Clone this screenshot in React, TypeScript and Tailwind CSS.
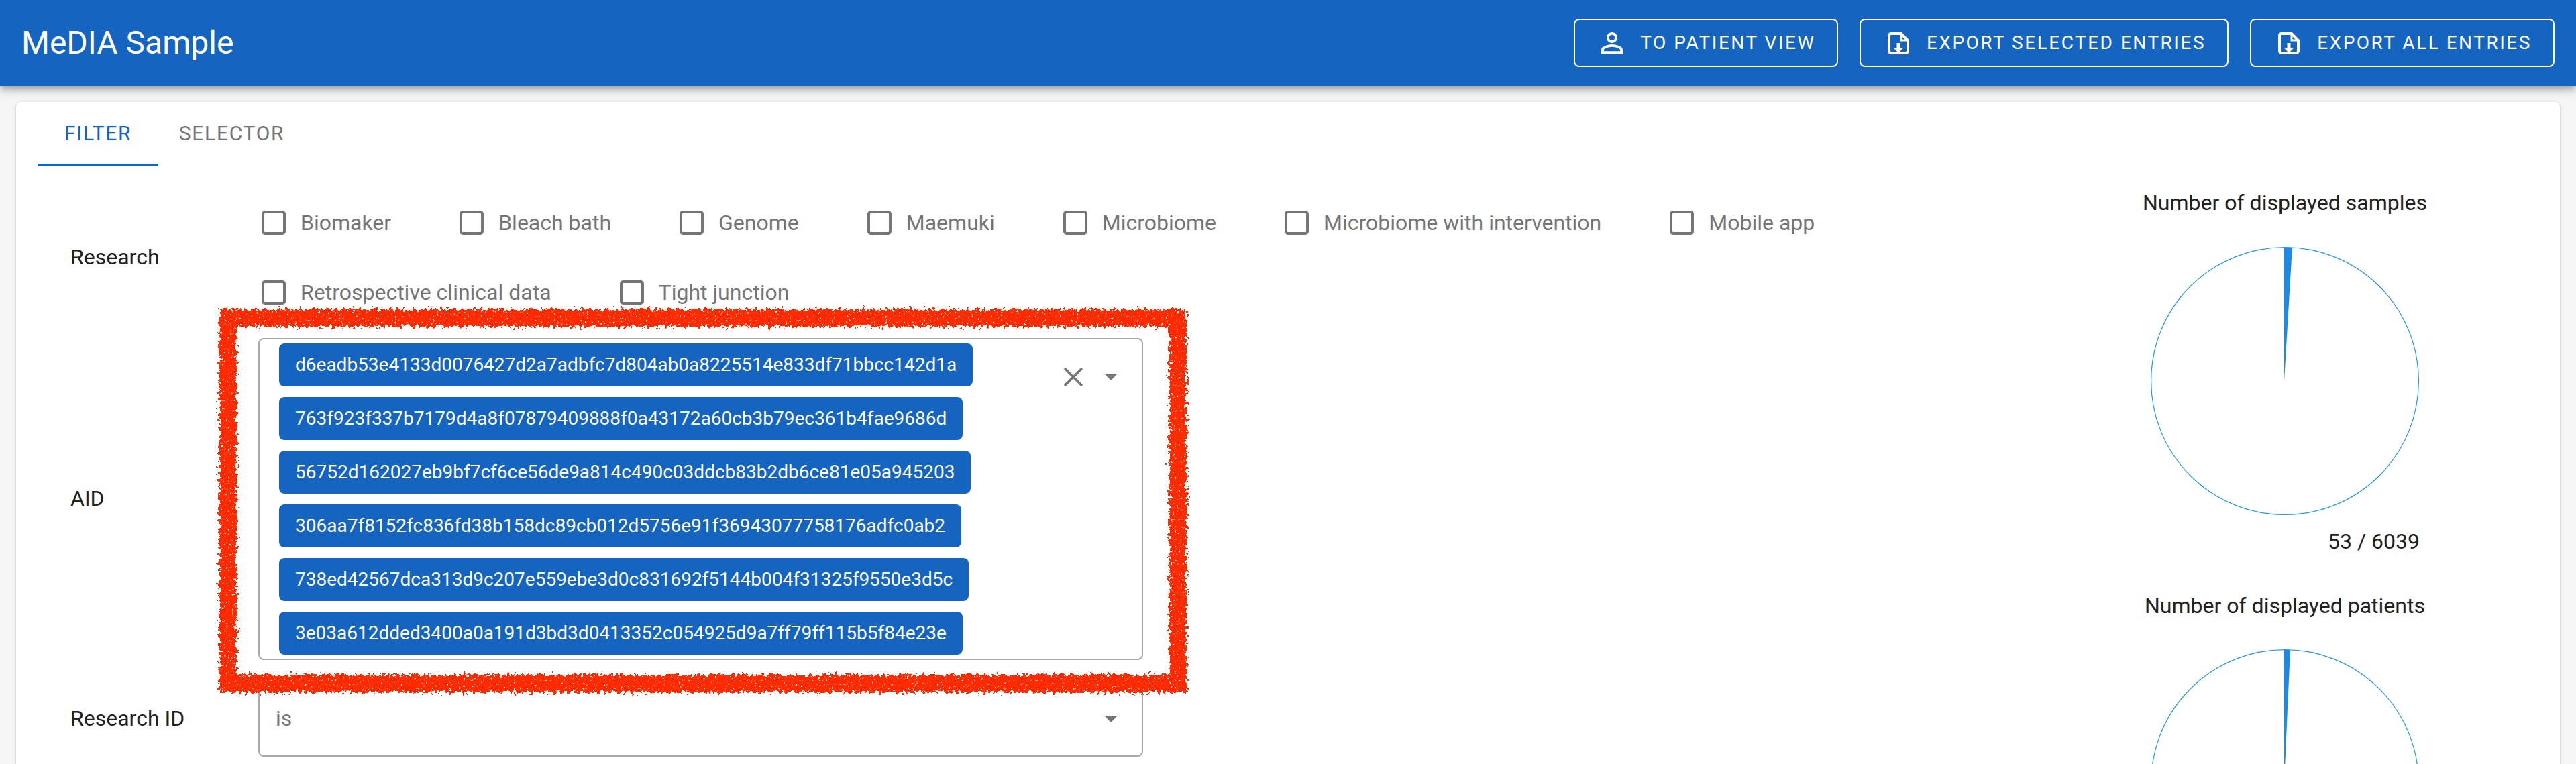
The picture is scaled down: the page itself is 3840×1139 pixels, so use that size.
const AIDS = [
  "d6eadb53e4133d0076427d2a7adbfc7d804ab0a8225514e833df71bbcc142d1a",
  "763f923f337b7179d4a8f07879409888f0a43172a60cb3b79ec361b4fae9686d",
  "56752d162027eb9bf7cf6ce56de9a814c490c03ddcb83b2db6ce81e05a945203",
  "306aa7f8152fc836fd38b158dc89cb012d5756e91f36943077758176adfc0ab2",
  "738ed42567dca313d9c207e559ebe3d0c831692f5144b004f31325f9550e3d5c",
  "3e03a612dded3400a0a191d3bd3d0413352c054925d9a7ff79ff115b5f84e23e",
];

const ROW_ONE = [
  "Biomaker",
  "Bleach bath",
  "Genome",
  "Maemuki",
  "Microbiome",
  "Microbiome with intervention",
  "Mobile app",
];
const ROW_TWO = ["Retrospective clinical data", "Tight junction"];

function PersonIcon() {
  return (
    <svg viewBox="0 0 24 24" className="w-[48px] h-[48px] fill-white shrink-0">
      <path d="M12 5.9c1.16 0 2.1.94 2.1 2.1s-.94 2.1-2.1 2.1S9.9 9.16 9.9 8s.94-2.1 2.1-2.1m0 9c2.97 0 6.1 1.46 6.1 2.1v1.1H5.9V17c0-.64 3.13-2.1 6.1-2.1M12 4C9.79 4 8 5.79 8 8s1.79 4 4 4 4-1.79 4-4-1.79-4-4-4zm0 9c-2.67 0-8 1.34-8 4v3h16v-3c0-2.66-5.33-4-8-4z" />
    </svg>
  );
}

function FileIcon() {
  return (
    <div className="w-[48px] h-[48px] flex items-center justify-center shrink-0">
      <svg viewBox="0 0 32 33" className="w-[32px] h-[33px]" fill="none">
        <path d="M2 5a3 3 0 0 1 3-3H20L30 12V28a3 3 0 0 1-3 3H5a3 3 0 0 1-3-3Z" stroke="white" strokeWidth="4" />
        <path d="M20 2V12H30" stroke="white" strokeWidth="3" />
        <path d="M13.5 16h5v7H23.5L16 31 8.5 23H13.5Z" fill="white" />
      </svg>
    </div>
  );
}

function ArrowDrop() {
  return (
    <svg viewBox="0 0 20 10" className="w-[20px] h-[10px] fill-[#757575] shrink-0">
      <path d="M0 0h20L10 10z" />
    </svg>
  );
}

function HeaderButton({ icon, label, width }: { icon: React.ReactNode; label: string; width: string }) {
  return (
    <button className={`${width} h-[72px] flex items-center justify-center gap-[18px] rounded-lg border-2 border-white text-white text-[28px] tracking-[2.5px] uppercase`}>
      {icon}
      {label}
    </button>
  );
}

function CheckItem({ label }: { label: string }) {
  return (
    <label className="flex items-center gap-[22px] h-[36px] text-[#757575]">
      <span className="w-[36px] h-[36px] rounded-[5px] border-[4px] border-[#757575]" />
      {label}
    </label>
  );
}

function Pie({ angle }: { angle: number }) {
  const rad = (angle * Math.PI) / 180;
  const x = 200 + 199.5 * Math.sin(rad);
  const y = 200 - 199.5 * Math.cos(rad);
  return (
    <svg width="400" height="400" viewBox="0 0 400 400" className="block">
      <circle cx="200" cy="200" r="199.4" fill="white" stroke="#2196f3" strokeWidth="1.2" />
      <path d={`M199 200 L198.5 0.5 L${x} ${y} Z`} fill="#1e88e5" />
    </svg>
  );
}

export default function App() {
  return (
    <div className="relative w-full h-[1139px] overflow-hidden bg-[#f5f5f5] font-['Roboto',sans-serif] text-[32px] text-[#212121]">
      <header className="relative z-10 h-[128px] flex items-center justify-between pl-[32px] pr-[32px] bg-[#1565c0] shadow-[0_4px_8px_-2px_rgba(0,0,0,0.2),0_8px_10px_0_rgba(0,0,0,0.14),0_2px_20px_0_rgba(0,0,0,0.12)]">
        <h1 className="text-[48px] font-normal text-white">MeDIA Sample</h1>
        <div className="flex gap-[32px]">
          <HeaderButton icon={<PersonIcon />} label="To patient view" width="w-[394px]" />
          <HeaderButton icon={<FileIcon />} label="Export selected entries" width="w-[550px]" />
          <HeaderButton icon={<FileIcon />} label="Export all entries" width="w-[454px]" />
        </div>
      </header>

      <main className="pt-[24px] px-[24px]">
        <div className="h-[1200px] rounded-lg bg-white shadow-[0_2px_2px_-1px_rgba(0,0,0,0.2),0_1px_2px_0_rgba(0,0,0,0.14),0_1px_6px_0_rgba(0,0,0,0.12)]">
          <div className="flex h-[96px] pl-[32px] uppercase text-[30px] tracking-[1.7px]">
            <div className="w-[180px] flex items-center justify-center text-[#1565c0] border-b-4 border-[#1565c0]">Filter</div>
            <div className="w-[219px] flex items-center justify-center text-[#757575] pb-[4px]">Selector</div>
          </div>

          <div className="flex">
            <div className="flex-1 pl-[81px] pt-[66px]">
              <div className="flex items-center">
                <div className="w-[280px] pb-[3px]">Research</div>
                <div className="flex flex-col gap-[68px] pl-[5px]">
                  <div className="flex gap-x-[102px]">
                    {ROW_ONE.map((l) => (
                      <CheckItem key={l} label={l} />
                    ))}
                  </div>
                  <div className="flex gap-x-[102px]">
                    {ROW_TWO.map((l) => (
                      <CheckItem key={l} label={l} />
                    ))}
                  </div>
                </div>
              </div>

              <div className="flex items-center mt-[50px]">
                <div className="w-[280px] pb-[3px]">AID</div>
                <div className="w-[1319px] h-[480px] rounded-lg border-2 border-[#a8a8a8] flex justify-between pl-[29px] pr-[36px] pt-[6px]">
                  <div className="flex flex-col items-start gap-[16px]">
                    {AIDS.map((a) => (
                      <span key={a} className="h-[64px] flex items-center px-[24px] rounded-lg bg-[#1565c0] text-white text-[28px]">
                        {a}
                      </span>
                    ))}
                  </div>
                  <div className="flex items-center gap-[32px] h-[100px] self-start">
                    <svg viewBox="0 0 28 28" className="w-[28px] h-[28px] stroke-[#757575] stroke-[3.5px] shrink-0">
                      <path d="M1 1L27 27M27 1L1 27" />
                    </svg>
                    <ArrowDrop />
                  </div>
                </div>
              </div>

              <div className="flex items-center mt-[32px]">
                <div className="w-[280px] pb-[3px]">Research ID</div>
                <div className="w-[1319px] h-[112px] rounded-lg border-2 border-[#a8a8a8] flex items-center justify-between pl-[24px] pr-[36px] text-[#757575]">
                  <span className="pb-[2px]">is</span>
                  <ArrowDrop />
                </div>
              </div>
            </div>

            <div className="w-[620px] mr-[100px] flex flex-col items-center pt-[34px]">
              <div className="leading-[40px]">Number of displayed samples</div>
              <div className="mt-[46px]">
                <Pie angle={3.16} />
              </div>
              <div className="w-[402px] mt-[19px] leading-[40px] text-right">53 / 6039</div>
              <div className="mt-[56px] leading-[40px]">Number of displayed patients</div>
              <div className="mt-[45px]">
                <Pie angle={2.3} />
              </div>
            </div>
          </div>
        </div>
      </main>

      <svg className="absolute left-[320px] top-[454px] w-[1456px] h-[586px] pointer-events-none" viewBox="0 0 1456 586" fill="none">
        <defs>
          <filter id="rough" x="-5%" y="-5%" width="110%" height="110%">
            <feTurbulence type="fractalNoise" baseFrequency="0.2 0.2" numOctaves="4" seed="4" result="n" />
            <feDisplacementMap in="SourceGraphic" in2="n" scale="16" result="d" />
            <feTurbulence type="fractalNoise" baseFrequency="0.35 0.35" numOctaves="2" seed="9" />
            <feColorMatrix values="0 0 0 0 0 0 0 0 0 0 0 0 0 0 0 9 0 0 0 -2" result="m" />
            <feComposite in="d" in2="m" operator="in" />
          </filter>
        </defs>
        <rect x="20" y="20" width="1416" height="545" stroke="#ff2a00" strokeWidth="26" filter="url(#rough)" />
      </svg>
    </div>
  );
}
